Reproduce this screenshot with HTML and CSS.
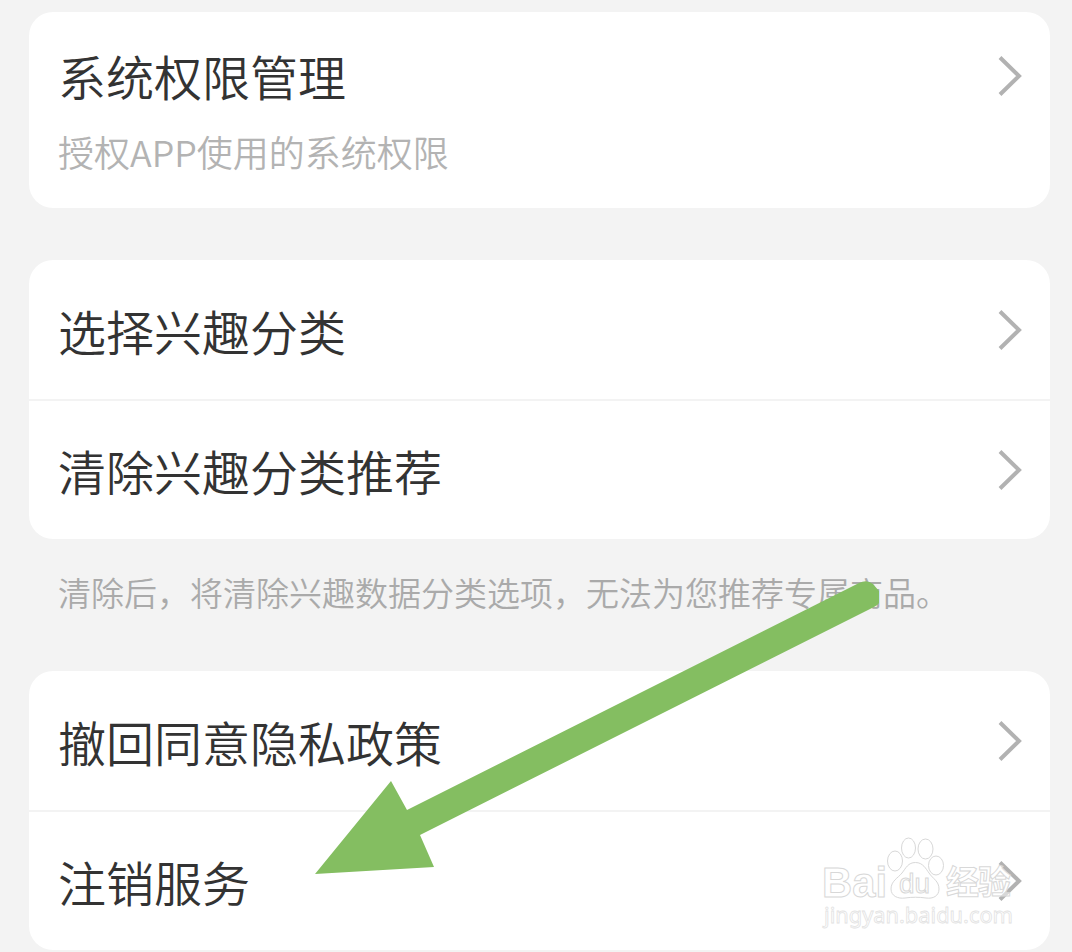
FILE: index.html
```
<!DOCTYPE html>
<html lang="zh-CN">
<head>
    <meta charset="UTF-8">
    <meta name="viewport" content="width=device-width, initial-scale=1.0">
    <title>隐私设置</title>
    <link rel="stylesheet" href="styles.css">
</head>
<body>
    <div class="page">
        <div class="card">
            <div class="row row-tall">
                <div class="row-text">
                    <div class="title">系统权限管理</div>
                    <div class="subtitle">授权APP使用的系统权限</div>
                </div>
                <svg class="chevron" viewBox="0 0 24 40"><path d="M2 1.5 L21 20 L2 38.5"/></svg>
            </div>
        </div>

        <div class="card">
            <div class="row">
                <div class="title">选择兴趣分类</div>
                <svg class="chevron" viewBox="0 0 24 40"><path d="M2 1.5 L21 20 L2 38.5"/></svg>
            </div>
            <div class="row">
                <div class="title">清除兴趣分类推荐</div>
                <svg class="chevron" viewBox="0 0 24 40"><path d="M2 1.5 L21 20 L2 38.5"/></svg>
            </div>
        </div>

        <p class="note">清除后，将清除兴趣数据分类选项，无法为您推荐专属商品。</p>

        <div class="card">
            <div class="row">
                <div class="title">撤回同意隐私政策</div>
                <svg class="chevron" viewBox="0 0 24 40"><path d="M2 1.5 L21 20 L2 38.5"/></svg>
            </div>
            <div class="row">
                <div class="title">注销服务</div>
                <svg class="chevron" viewBox="0 0 24 40"><path d="M2 1.5 L21 20 L2 38.5"/></svg>
            </div>
        </div>

        <!-- arrow pointing at the last row -->
        <svg class="arrow" viewBox="0 0 564 294">
            <path d="M0 294 L76 201 L92 230 L544 3 Q552 -1 558 4 L564 11 V23 Q563 25 559 27 L105 255 L119 287 Z"/>
        </svg>

        <svg class="watermark" viewBox="0 0 200 100">
            <ellipse cx="75" cy="32" rx="7.5" ry="10"/>
            <ellipse cx="88.5" cy="19" rx="7" ry="10"/>
            <ellipse cx="105.5" cy="20" rx="7.5" ry="10"/>
            <ellipse cx="116" cy="36.5" rx="7.5" ry="9.5"/>
            <path d="M95.500 33.500 C103 33.500 106 40 109 44 C113 50 119 52 119 60 C119 67 113 70 106 69 C99 68 92 68 85 69 C78 70 71 67 71 60 C71 52 78 49 82 44 C86 39 88 33.500 95.500 33.500 Z"/>
            <text class="wm-brand" x="2" y="68" textLength="65" lengthAdjust="spacingAndGlyphs">Bai</text>
            <text class="wm-du" x="79" y="64" textLength="31" lengthAdjust="spacingAndGlyphs">du</text>
            <text class="wm-cn" x="126" y="65" textLength="65">经验</text>
            <text class="wm-url" x="4" y="93.500" textLength="189" lengthAdjust="spacingAndGlyphs">jingyan.baidu.com</text>
        </svg>
    </div>
</body>
</html>
```
FILE: styles.css
```
* {
    box-sizing: border-box;
}
body {
    margin: 0;
    background-color: #f3f3f3;
    font-family: "Noto Sans CJK SC DemiLight", "Noto Sans CJK SC", sans-serif;
    font-weight: 350;
}
.page {
    position: relative;
    height: 952px;
    padding: 12px 22px 0 29px;
    overflow: hidden;
}
.card {
    background-color: #fff;
    border-radius: 24px;
    margin-bottom: 52px;
}
.row {
    display: flex;
    align-items: center;
    justify-content: space-between;
    height: 139px;
    padding: 0 28px 0 29px;
}
.row + .row {
    height: 140px;
    border-top: 2px solid #f3f3f3;
}
.row-tall {
    align-items: flex-start;
    height: 196px;
    padding-top: 30px;
}
.row-tall .chevron {
    margin-top: 14px;
}
.title {
    font-size: 48px;
    line-height: 66px;
    color: #333;
}
.subtitle {
    margin-top: 17px;
    font-size: 36px;
    line-height: 52px;
    color: #b3b3b3;
}
.chevron {
    flex: none;
    width: 24px;
    height: 40px;
    fill: none;
    stroke: #b2b2b2;
    stroke-width: 4;
}
.note {
    margin: -23px 0 55px;
    padding-left: 29px;
    font-size: 33px;
    line-height: 48px;
    color: #aaa;
    white-space: nowrap;
}
.arrow {
    position: absolute;
    left: 315px;
    top: 580px;
    width: 564px;
    height: 294px;
    fill: #84be61;
}
.watermark {
    position: absolute;
    left: 820px;
    top: 829px;
    width: 200px;
    height: 100px;
    fill: rgba(255, 255, 255, 0.5);
    stroke: #d8d8d8;
    stroke-width: 1;
}
.wm-brand {
    font: 700 42px "Liberation Sans", Arial, sans-serif;
}
.wm-du {
    font: 400 27px "Liberation Sans", Arial, sans-serif;
}
.wm-cn {
    font: 700 33px "Noto Sans CJK SC", sans-serif;
}
.wm-url {
    font: 400 22px "Noto Sans", sans-serif;
    stroke: #e2e2e2;
    stroke-width: 0.8;
}
```
